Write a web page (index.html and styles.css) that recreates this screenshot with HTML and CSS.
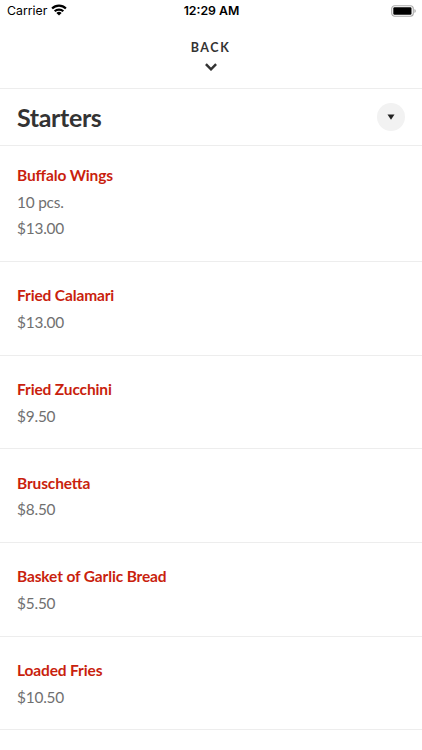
FILE: index.html
```html
<!DOCTYPE html>
<html lang="en">
<head>
<meta charset="utf-8">
<title>Menu</title>
<link rel="stylesheet" href="styles.css">
</head>
<body>
<header class="status">
  <div class="carrier"><span>Carrier</span>
    <svg class="wifi" width="16" height="12" viewBox="0 0 16 12"><path d="M8 11.6 5.4 9a3.7 3.7 0 0 1 5.2 0Z"/><path d="M3.7 7.3a6.1 6.1 0 0 1 8.6 0M1.1 4.5a9.8 9.8 0 0 1 13.8 0" fill="none" stroke="#000" stroke-width="2.2"/></svg>
  </div>
  <time class="clock">12:29 AM</time>
  <svg class="battery" width="25" height="12" viewBox="0 0 25 12"><rect x=".7" y=".7" width="21.6" height="10.6" rx="3" fill="none" stroke="#aaa" stroke-width="1.1"/><rect x="2.3" y="2.3" width="18.2" height="7.4" rx="1.2"/><path d="M23.5 4v4q1.2-.6 1.2-2t-1.2-2Z" fill="#999"/></svg>
</header>
<nav class="back"><span>BACK</span>
  <svg width="12" height="8" viewBox="0 0 12 8"><path d="M.9 1.2 6 6.3l5.1-5.1" fill="none" stroke="#333" stroke-width="2.5"/></svg>
</nav>
<section class="heading"><h1>Starters</h1>
  <button class="toggle" aria-label="Choose section"><svg width="8" height="6" viewBox="0 0 8 6"><path d="M.5.5h7L4 5.8Z" fill="#222"/></svg></button>
</section>
<main class="menu">
  <article class="item first"><h2>Buffalo Wings</h2><p>10 pcs.</p><p>$13.00</p></article>
  <article class="item"><h2>Fried Calamari</h2><p>$13.00</p></article>
  <article class="item"><h2>Fried Zucchini</h2><p>$9.50</p></article>
  <article class="item"><h2>Bruschetta</h2><p>$8.50</p></article>
  <article class="item"><h2>Basket of Garlic Bread</h2><p>$5.50</p></article>
  <article class="item"><h2>Loaded Fries</h2><p>$10.50</p></article>
</main>
</body>
</html>
```
FILE: styles.css
```css
* { box-sizing: border-box; }
body { margin: 0; height: 750px; overflow: hidden; background: #fff; color: #333; font-family: Lato, sans-serif; }
h1, h2, p { margin: 0; }
.status { display: grid; grid-template-columns: 1fr auto 1fr; align-items: center; height: 22px; padding: 0 6px 0 7px; font: 12.3px/22px Inter, sans-serif; color: #000; }
.carrier { display: flex; align-items: center; gap: 4px; }
.wifi { margin-bottom: 2px; }
.clock { font-weight: 600; }
.battery { justify-self: end; margin-bottom: 1px; }
.back { display: flex; flex-direction: column; align-items: center; height: 67px; padding: 17px 1px 0 0; border-bottom: 1px solid #ededed; font-size: 12.5px; font-weight: 700; line-height: 17px; letter-spacing: 1.6px; }
.back svg { margin-top: 7px; }
.heading { display: flex; align-items: center; justify-content: space-between; height: 57px; padding: 0 17px; border-bottom: 1px solid #ededed; }
h1 { font-size: 25px; line-height: 30px; font-weight: 700; letter-spacing: -.35px; }
.toggle { display: grid; place-items: center; width: 28px; height: 28px; padding: 0; border: 0; border-radius: 50%; background: #f2f2f2; }
.item { height: 93.7px; padding: 20.4px 17px 0; border-bottom: 1px solid #ededed; font-size: 15.4px; line-height: 26.5px; letter-spacing: -.2px; }
.first { height: 116px; padding-top: 16.2px; }
h2 { color: #c91f0e; font-size: 15.5px; font-weight: 700; line-height: 26.5px; letter-spacing: -.14px; font-feature-settings: "liga" 1; }
p { color: #707070; }
```
